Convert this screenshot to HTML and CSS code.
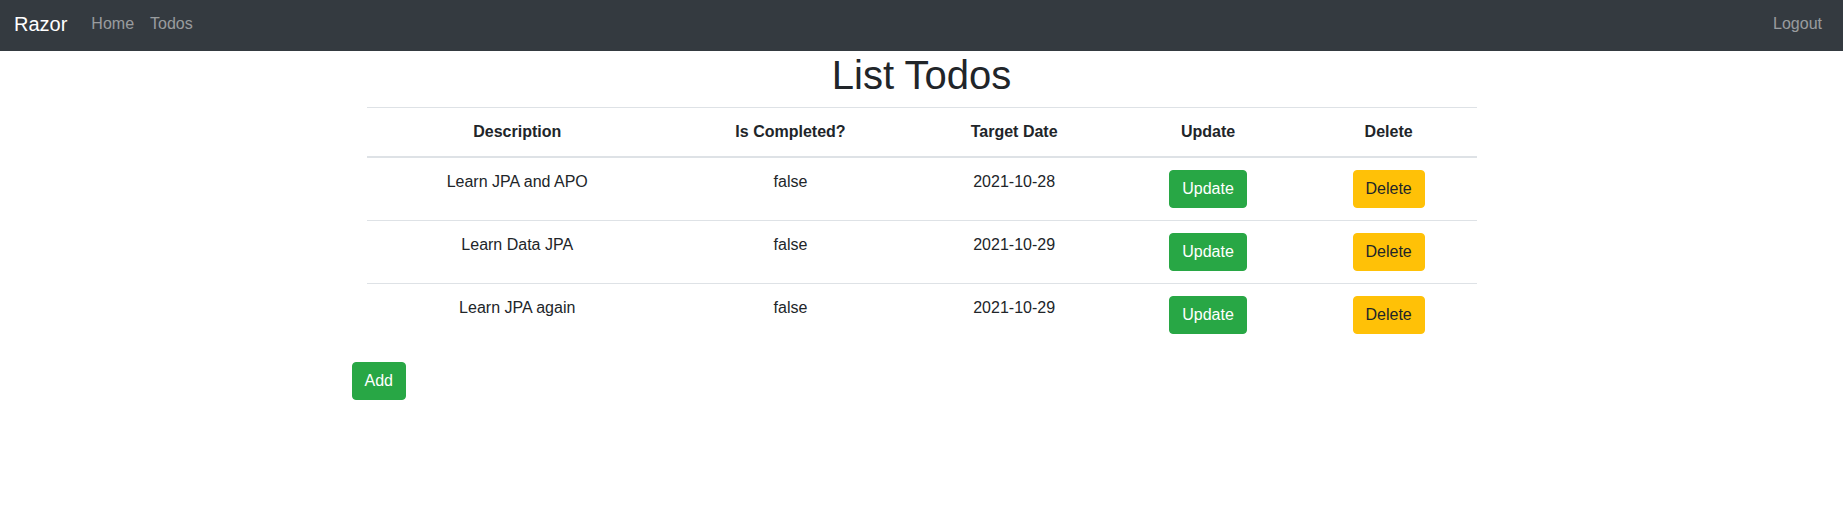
FILE: index.html
```html
<!DOCTYPE html>
<html lang="en">
<head>
<meta charset="utf-8">
<title>List Todos</title>
<link rel="stylesheet" href="styles.css">
</head>
<body>
<nav class="navbar">
  <a class="brand" href="#">Razor</a>
  <ul class="nav">
    <li><a class="nav-link" href="#">Home</a></li>
    <li><a class="nav-link" href="#">Todos</a></li>
  </ul>
  <ul class="nav nav-right">
    <li><a class="nav-link" href="#">Logout</a></li>
  </ul>
</nav>
<div class="container">
  <div class="inner">
    <h1 class="title">List Todos</h1>
    <table class="table">
      <thead>
        <tr>
          <th>Description</th>
          <th>Is Completed?</th>
          <th>Target Date</th>
          <th>Update</th>
          <th>Delete</th>
        </tr>
      </thead>
      <tbody>
        <tr>
          <td>Learn JPA and APO</td>
          <td>false</td>
          <td>2021-10-28</td>
          <td><a class="btn btn-success" href="#">Update</a></td>
          <td><a class="btn btn-warning" href="#">Delete</a></td>
        </tr>
        <tr>
          <td>Learn Data JPA</td>
          <td>false</td>
          <td>2021-10-29</td>
          <td><a class="btn btn-success" href="#">Update</a></td>
          <td><a class="btn btn-warning" href="#">Delete</a></td>
        </tr>
        <tr>
          <td>Learn JPA again</td>
          <td>false</td>
          <td>2021-10-29</td>
          <td><a class="btn btn-success" href="#">Update</a></td>
          <td><a class="btn btn-warning" href="#">Delete</a></td>
        </tr>
      </tbody>
    </table>
  </div>
  <a class="btn btn-success" href="#">Add</a>
</div>
</body>
</html>
```

FILE: styles.css
```css
* { box-sizing: border-box; }
html, body { margin: 0; }
body {
  font-family: "Liberation Sans", Arial, sans-serif;
  font-size: 16px;
  line-height: 1.5;
  color: #212529;
  background: #fff;
}
a { text-decoration: none; }

.navbar {
  display: flex;
  align-items: center;
  height: 51px;
  padding: 0 13px 3px 14px;
  background: #343a40;
}
.brand {
  color: #fff;
  font-size: 20px;
  line-height: 30px;
  margin-right: 16px;
}
.nav {
  display: flex;
  list-style: none;
  margin: 0;
  padding: 0;
}
.nav-right { margin-left: auto; }
.nav-link {
  display: block;
  padding: 8px;
  color: rgba(255,255,255,.5);
}

.container {
  width: 1140px;
  margin: 0 auto;
}
.inner { padding: 0 15px; }
.title {
  margin: 0 0 8px 0;
  font-size: 40px;
  font-weight: 500;
  line-height: 1.2;
  text-align: center;
}
.table {
  width: 100%;
  border-collapse: collapse;
  margin-bottom: 16px;
  text-align: center;
}
.table th, .table td {
  padding: 12px;
  vertical-align: top;
  border-top: 1px solid #dee2e6;
}
.table thead th {
  vertical-align: bottom;
  border-bottom: 2px solid #dee2e6;
  font-weight: 700;
}
.btn {
  display: inline-block;
  padding: 6px 12px;
  font-size: 16px;
  line-height: 1.5;
  border: 1px solid transparent;
  border-radius: 4px;
  text-align: center;
}
.btn-success { background: #28a745; border-color: #28a745; color: #fff; }
.btn-warning { background: #ffc107; border-color: #ffc107; color: #212529; }
```
